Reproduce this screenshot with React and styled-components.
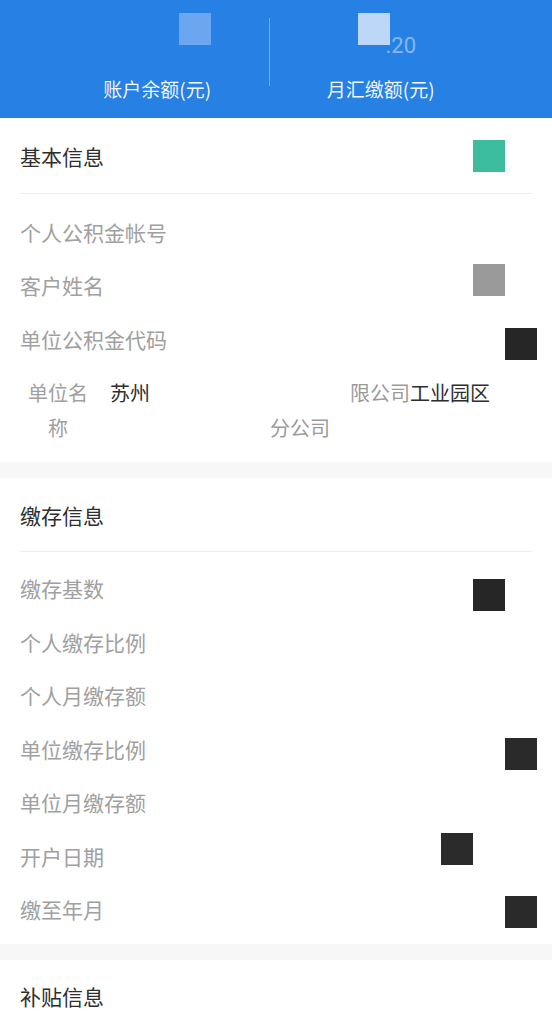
import React from 'react'
import styled, { createGlobalStyle } from 'styled-components'

const GlobalStyle = createGlobalStyle`
  * {
    box-sizing: border-box;
  }
  body {
    margin: 0;
    background: #f7f7f7;
    font-family: 'Noto Sans CJK SC', 'Noto Sans', sans-serif;
  }
`

const Header = styled.div`
  height: 118px;
  display: flex;
  padding: 13px 60px 0 46px;
  background: #2780e3;
  color: #fff;
`

const Stat = styled.div`
  flex: 1;
  display: flex;
  flex-direction: column;
  align-items: center;
`

const AmountRow = styled.div`
  height: 62px;
  display: flex;
  justify-content: center;
  align-items: flex-start;
  padding-left: ${(p) => p.$shift || 0}px;
`

const Cents = styled.span`
  align-self: flex-end;
  margin: 0 0 18px -5px;
  font-family: 'Roboto', 'Liberation Sans', sans-serif;
  font-size: 22px;
  line-height: 22px;
  color: rgba(255, 255, 255, 0.45);
`

const StatLabel = styled.div`
  font-size: 19px;
  line-height: 28px;
  color: rgba(255, 255, 255, 0.95);
`

const VLine = styled.div`
  width: 1px;
  height: 68px;
  margin-top: 5px;
  background: rgba(255, 255, 255, 0.35);
`

const Mask = styled.span`
  display: block;
  flex: none;
  width: 32px;
  height: 32px;
  background: ${(p) => p.$color};
  margin-right: ${(p) => p.$dx || 0}px;
  position: relative;
  top: ${(p) => p.$dy || 0}px;
`

const Section = styled.section`
  background: #fff;
  margin-bottom: 16px;
  padding: 0 20px ${(p) => p.$bottom || 0}px;
`

const TitleRow = styled.div`
  height: ${(p) => p.$h || 77}px;
  padding-top: ${(p) => p.$pt || 0}px;
  display: flex;
  align-items: center;
  justify-content: space-between;
  border-bottom: ${(p) => (p.$line ? '1px solid #eeeeee' : 'none')};
`

const Title = styled.h2`
  margin: 0;
  font-size: 21px;
  font-weight: 400;
  color: #2e2e2e;
`

const Rows = styled.div`
  padding-top: ${(p) => p.$pt || 10}px;
`

const Row = styled.div`
  height: 53.5px;
  display: flex;
  align-items: center;
  justify-content: space-between;
`

const Label = styled.span`
  font-size: 21px;
  color: #a0a0a0;
`

const NameRow = styled.div`
  display: flex;
  padding: 9px 40px 17px 7px;
  gap: 19px;
`

const NameLabel = styled.div`
  width: 62px;
  flex: none;
  font-size: 20px;
  line-height: 35px;
  text-align: center;
  color: #a0a0a0;
`

const NameValue = styled.div`
  flex: 1;
  font-size: 20px;
  line-height: 35px;
  text-align: center;
  color: #2e2e2e;
`

const Hidden = styled.span`
  color: transparent;
`

const Faded = styled.span`
  color: #9a9a9a;
`

const basicRows = [
  { label: '个人公积金帐号' },
  { label: '客户姓名', mask: '#9a9a9a', dx: 27, dy: -5 },
  { label: '单位公积金代码', mask: '#262626', dx: -5, dy: 5 },
]

const depositRows = [
  { label: '缴存基数', mask: '#262626', dx: 27, dy: 7 },
  { label: '个人缴存比例' },
  { label: '个人月缴存额' },
  { label: '单位缴存比例', mask: '#2a2a2a', dx: -5, dy: 5 },
  { label: '单位月缴存额' },
  { label: '开户日期', mask: '#2b2b2b', dx: 59, dy: -7 },
  { label: '缴至年月', mask: '#2a2a2a', dx: -5, dy: 3 },
]

const InfoRows = ({ rows, pt }) => (
  <Rows $pt={pt}>
    {rows.map((r) => (
      <Row key={r.label}>
        <Label>{r.label}</Label>
        {r.mask && <Mask $color={r.mask} $dx={r.dx} $dy={r.dy} />}
      </Row>
    ))}
  </Rows>
)

const App = () => {
  return (
    <>
      <GlobalStyle />
      <Header>
        <Stat>
          <AmountRow $shift={75}>
            <Mask $color="#6ba6ee" />
          </AmountRow>
          <StatLabel>账户余额(元)</StatLabel>
        </Stat>
        <VLine />
        <Stat>
          <AmountRow $shift={13}>
            <Mask $color="#bcd7f7" />
            <Cents>.20</Cents>
          </AmountRow>
          <StatLabel>月汇缴额(元)</StatLabel>
        </Stat>
      </Header>

      <Section>
        <TitleRow $h={76} $line>
          <Title>基本信息</Title>
          <Mask $color="#3cbda0" $dx={27} />
        </TitleRow>
        <InfoRows rows={basicRows} pt={11} />
        <NameRow>
          <NameLabel>单位名称</NameLabel>
          <NameValue>
            苏州<Hidden>某某某某某某某某某某</Hidden>
            <Faded>限公司</Faded>工业园区<Faded>分公司</Faded>
          </NameValue>
        </NameRow>
      </Section>

      <Section $bottom={8}>
        <TitleRow $h={74} $pt={2} $line>
          <Title>缴存信息</Title>
        </TitleRow>
        <InfoRows rows={depositRows} pt={10} />
      </Section>

      <Section>
        <TitleRow $h={72}>
          <Title>补贴信息</Title>
        </TitleRow>
      </Section>
    </>
  )
}

export default App
